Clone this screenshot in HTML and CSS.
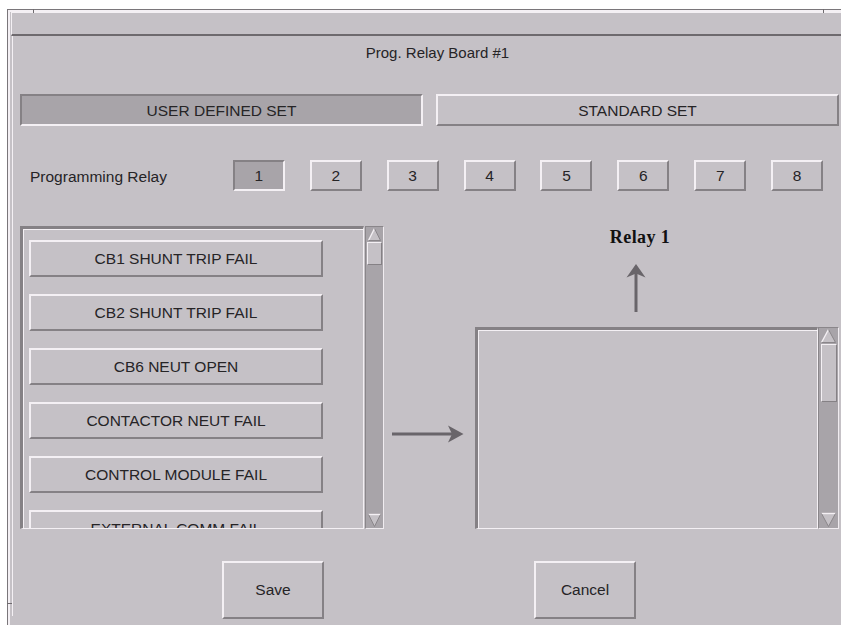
FILE: index.html
```html
<!DOCTYPE html>
<html>
<head>
<meta charset="utf-8">
<title>Prog. Relay Board #1</title>
<link rel="stylesheet" href="styles.css">
</head>
<body>
<div class="window">
  <span class="tick tick-tl"></span>
  <span class="tick tick-tr"></span>
  <span class="tick tick-bl"></span>
  <div class="titlebar"></div>
  <div class="panel">
    <div class="heading">Prog. Relay Board #1</div>

    <div class="tabs">
      <div class="btn tab pressed">USER DEFINED SET</div>
      <div class="btn tab">STANDARD SET</div>
    </div>

    <div class="relay-row">
      <div class="relay-label">Programming Relay</div>
      <div class="btn num pressed">1</div>
      <div class="btn num">2</div>
      <div class="btn num">3</div>
      <div class="btn num">4</div>
      <div class="btn num">5</div>
      <div class="btn num">6</div>
      <div class="btn num">7</div>
      <div class="btn num">8</div>
    </div>

    <div class="lists">
      <div class="scrolled scrolled-left">
        <div class="list list-items">
          <div class="btn item">CB1 SHUNT TRIP FAIL</div>
          <div class="btn item">CB2 SHUNT TRIP FAIL</div>
          <div class="btn item">CB6 NEUT OPEN</div>
          <div class="btn item">CONTACTOR NEUT FAIL</div>
          <div class="btn item">CONTROL MODULE FAIL</div>
          <div class="btn item">EXTERNAL COMM FAIL</div>
        </div>
        <div class="scrollbar sb-left">
          <svg class="sb-arrow" width="15" height="15" viewBox="0 0 15 15"><polygon points="7.5,1.5 13.5,13.5 1.5,13.5" fill="#c5c1c6"/><polyline points="1.5,13.5 7.5,1.5" fill="none" stroke="#f4f0f4" stroke-width="1.4"/><polyline points="7.5,1.5 13.5,13.5 1.5,13.5" fill="none" stroke="#8a868a" stroke-width="1"/></svg>
          <div class="thumb thumb-left"></div>
          <div class="sb-fill"></div>
          <svg class="sb-arrow" width="15" height="15" viewBox="0 0 15 15"><polygon points="1.5,1.5 13.5,1.5 7.5,13.5" fill="#c5c1c6"/><polyline points="1.5,1.5 13.5,1.5" fill="none" stroke="#f4f0f4" stroke-width="1.4"/><polyline points="1.5,1.5 7.5,13.5 13.5,1.5" fill="none" stroke="#8a868a" stroke-width="1"/></svg>
        </div>
      </div>

      <div class="mid">
        <svg class="arrow-right" width="72" height="18" viewBox="0 0 72 18"><line x1="0" y1="9" x2="64" y2="9" stroke="#69656a" stroke-width="3"/><polygon points="56,0.5 71.5,9 56,17.5 60,9" fill="#69656a"/></svg>
      </div>

      <div class="right-col">
        <div class="relay-head">
          <div class="relay-title">Relay 1</div>
          <svg class="arrow-up" width="20" height="48" viewBox="0 0 20 48"><line x1="10" y1="8" x2="10" y2="48" stroke="#69656a" stroke-width="3"/><polygon points="10,0 19.5,13.5 10,9.5 0.5,13.5" fill="#69656a"/></svg>
        </div>
        <div class="scrolled scrolled-right">
          <div class="list"></div>
          <div class="scrollbar sb-right">
            <svg class="sb-arrow" width="17" height="16" viewBox="0 0 17 16"><polygon points="8.5,1.5 15.5,14.5 1.5,14.5" fill="#c5c1c6"/><polyline points="1.5,14.5 8.5,1.5" fill="none" stroke="#f4f0f4" stroke-width="1.4"/><polyline points="8.5,1.5 15.5,14.5 1.5,14.5" fill="none" stroke="#8a868a" stroke-width="1"/></svg>
            <div class="thumb thumb-right"></div>
            <div class="sb-fill"></div>
            <svg class="sb-arrow" width="17" height="16" viewBox="0 0 17 16"><polygon points="1.5,1.5 15.5,1.5 8.5,14.5" fill="#c5c1c6"/><polyline points="1.5,1.5 15.5,1.5" fill="none" stroke="#f4f0f4" stroke-width="1.4"/><polyline points="1.5,1.5 8.5,14.5 15.5,1.5" fill="none" stroke="#8a868a" stroke-width="1"/></svg>
          </div>
        </div>
      </div>
    </div>

    <div class="actions">
      <div class="btn action">Save</div>
      <div class="btn action">Cancel</div>
    </div>
  </div>
</div>
</body>
</html>
```

FILE: styles.css
```css
html, body {
  margin: 0;
  padding: 0;
  background: #ffffff;
  overflow: hidden;
}

body {
  font-family: "Liberation Sans", Arial, sans-serif;
  font-size: 15.5px;
  color: #262426;
}

.window {
  position: relative;
  box-sizing: border-box;
  width: 834px;
  height: 616px;
  margin: 9px 0 0 7px;
  padding: 2px 0 0 3px;
  background: #c5c1c6;
  border-top: 1px solid #7a767a;
  border-left: 1px solid #7a767a;
  box-shadow: inset 2px 2px 0 #f4f0f4;
}

.tick {
  position: absolute;
  background: #6e6a6e;
}
.tick-tl { left: 25px; top: -1px; width: 1px; height: 4px; }
.tick-tr { left: 815px; top: -1px; width: 1px; height: 4px; }
.tick-bl { left: -1px; top: 593px; width: 5px; height: 1px; }

.titlebar {
  box-sizing: border-box;
  height: 24px;
  border-top: 1px solid #f4f0f4;
  border-left: 1px solid #f4f0f4;
  border-bottom: 2px solid #6e6a6e;
}

.panel {
  box-sizing: border-box;
  height: 580px;
  margin-left: 1px;
  padding: 0 0 0 7px;
  border-left: 1px solid #f4f0f4;
}

.heading {
  padding: 7px 0 0 14px;
  height: 20px;
  line-height: 20px;
  text-align: center;
  font-size: 15px;
}

/* generic Motif-like button */
.btn {
  box-sizing: border-box;
  display: flex;
  align-items: center;
  justify-content: center;
  background: #c5c1c6;
  border-style: solid;
  border-width: 2px;
  border-color: #f4f0f4 #858185 #858185 #f4f0f4;
  white-space: nowrap;
}
.btn.pressed {
  background: #a8a4a9;
  border-color: #858185 #f4f0f4 #f4f0f4 #858185;
}

.tabs {
  display: flex;
  gap: 13px;
  margin-top: 31px;
}
.tab {
  width: 403px;
  height: 32px;
  padding-top: 1px;
}

.relay-row {
  display: flex;
  align-items: center;
  gap: 24.9px;
  margin-top: 34px;
  height: 31px;
}
.relay-label {
  width: 178px;
  padding-left: 10px;
  font-size: 15.5px;
  margin-right: -24.9px;
  padding-right: 24.9px;
  padding-top: 2px;
}
.num {
  width: 52px;
  height: 31px;
}

.lists {
  display: flex;
  align-items: flex-start;
  margin-top: 35px;
}

.scrolled {
  display: flex;
}
.scrolled-left {
  width: 364px;
  height: 303px;
}
.scrolled-right {
  width: 364px;
  height: 202px;
}

.list {
  box-sizing: border-box;
  flex: 1;
  overflow: hidden;
  background: #c5c1c6;
  border-top: 3px solid #858185;
  border-left: 3px solid #858185;
  border-bottom: 1px solid #f4f0f4;
  border-right: 1px solid #f4f0f4;
  box-shadow: inset 1px 1px 0 #f4f0f4;
}
.list-items {
  display: flex;
  flex-direction: column;
  gap: 17px;
  padding: 11px 0 0 6px;
}
.item {
  flex: none;
  width: 294px;
  height: 37px;
}

.scrollbar {
  box-sizing: border-box;
  display: flex;
  flex-direction: column;
  align-items: center;
  background: #a8a4a9;
  border-style: solid;
  border-width: 1px;
  border-color: #8a868a #f0ecf0 #f0ecf0 #8a868a;
}
.sb-left {
  width: 19px;
  margin-left: 1px;
}
.sb-right {
  width: 21px;
}
.sb-arrow {
  flex: none;
  display: block;
}
.sb-fill {
  flex: 1;
}
.thumb {
  box-sizing: border-box;
  background: #c5c1c6;
  border-style: solid;
  border-width: 1px;
  border-color: #f4f0f4 #858185 #858185 #f4f0f4;
}
.thumb-left {
  width: 15px;
  height: 23px;
}
.thumb-right {
  width: 16px;
  height: 58px;
}

.mid {
  width: 91px;
  padding-left: 8px;
  box-sizing: border-box;
}
.arrow-right {
  display: block;
  margin-top: 199px;
}

.right-col {
  display: flex;
  flex-direction: column;
  width: 364px;
}
.relay-head {
  display: flex;
  flex-direction: column;
  align-items: center;
  width: 330px;
}
.relay-title {
  margin-top: 1px;
  height: 20px;
  line-height: 20px;
  font-family: "Liberation Serif", "Times New Roman", serif;
  font-weight: bold;
  font-size: 18px;
  letter-spacing: 0.4px;
  color: #111;
}
.arrow-up {
  display: block;
  margin: 17px 8px 15px 0;
}

.actions {
  display: flex;
  gap: 210px;
  margin: 32px 0 0 202px;
}
.action {
  width: 102px;
  height: 58px;
}
```
